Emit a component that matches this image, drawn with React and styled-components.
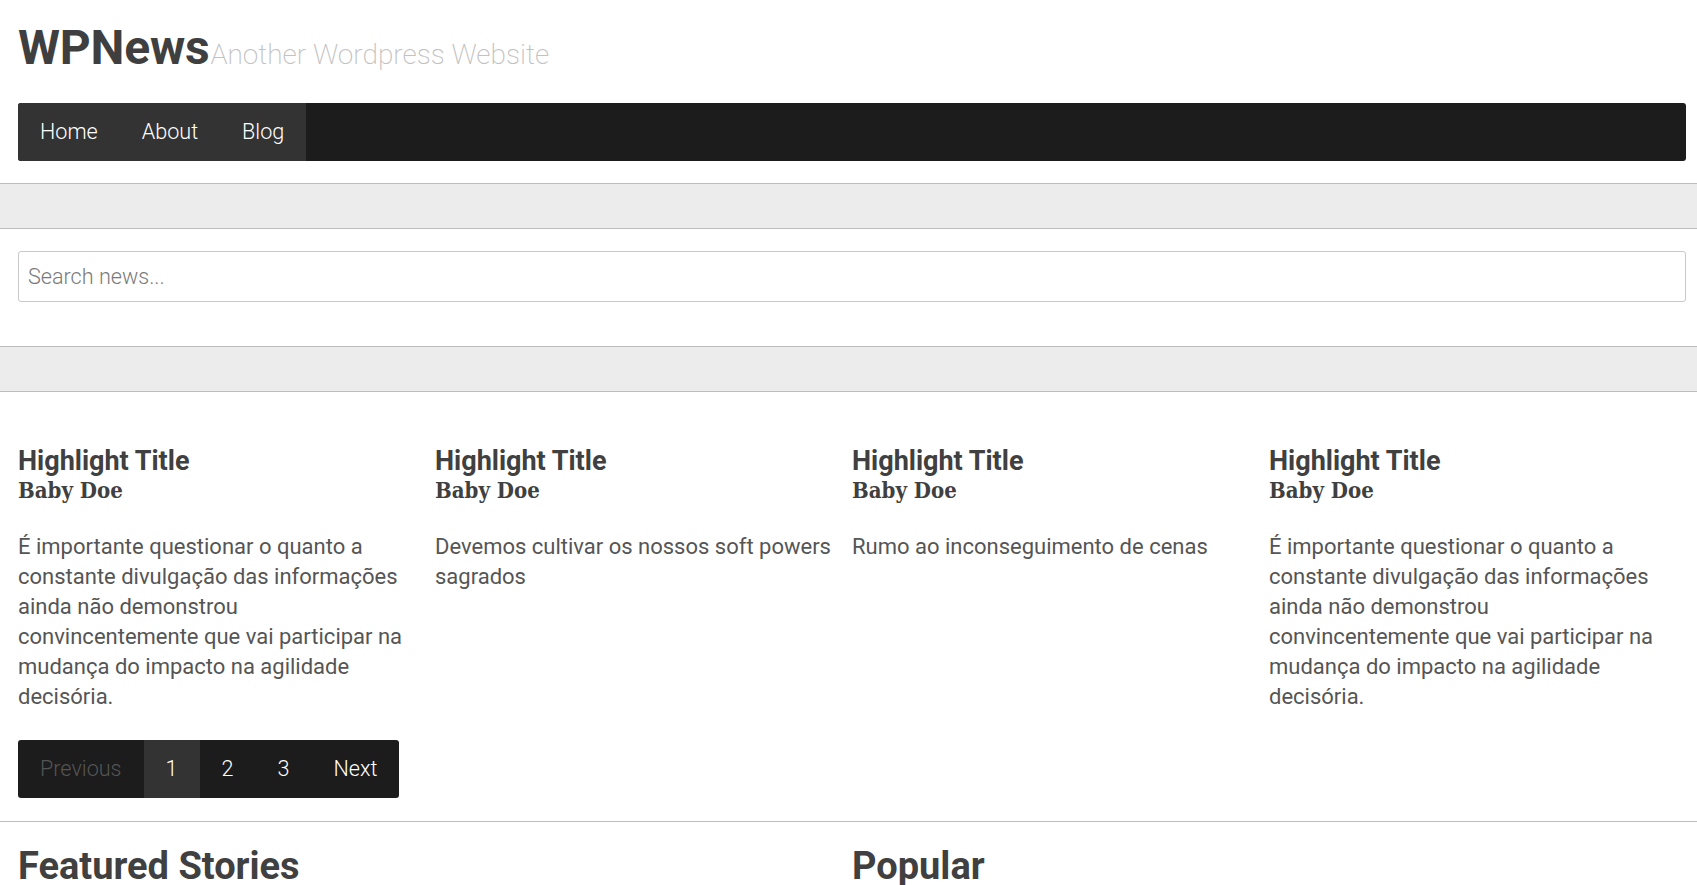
import React from "react";
import styled, { createGlobalStyle } from "styled-components";

const Global = createGlobalStyle`
  html, body { margin: 0; padding: 0; background: #fff; }
  body { font-family: Roboto, "Liberation Sans", sans-serif; color: #555; }
  * { box-sizing: border-box; }
`;

const Page = styled.div`
  width: 1697px;
  overflow: hidden;
`;

const Wrap = styled.div`
  padding: 0 11px 0 18px;
`;

const Brand = styled.h1`
  margin: 0;
  padding-top: 21px;
  display: flex;
  align-items: baseline;
  gap: 1px;
  font-size: 48px;
  line-height: 54px;
  font-weight: 700;
  color: #3f3f3f;
  letter-spacing: -0.2px;
`;

const Tagline = styled.span`
  font-size: 28px;
  font-weight: 200;
  color: #c2c2c2;
  letter-spacing: 0;
`;

const NavBar = styled.nav`
  margin-top: 21px;
  height: 58px;
  background: #1c1c1c;
  border-radius: 3px;
  display: flex;
  overflow: hidden;
`;

const NavGroup = styled.div`
  display: flex;
  background: #333;
`;

const NavItem = styled.a`
  display: block;
  padding: 0 22px;
  line-height: 58px;
  font-size: 21.6px;
  font-weight: 300;
  color: #fff;
  text-decoration: none;
`;

const Band = styled.div`
  margin-top: ${(p) => p.$top}px;
  height: 46px;
  background: #ececec;
  border-top: 1px solid #bdbdbd;
  border-bottom: 1px solid #bdbdbd;
`;

const Search = styled.input`
  display: block;
  width: 100%;
  height: 51px;
  margin-top: 22px;
  padding: 0 9px;
  border: 1px solid #c8c8c8;
  border-radius: 3px;
  font-family: Roboto, "Liberation Sans", sans-serif;
  font-size: 21.6px;
  font-weight: 300;
  color: #444;
  outline: none;
  &::placeholder { color: #7a7a7a; opacity: 1; }
`;

const Highlights = styled.div`
  margin-top: 55px;
  display: grid;
  grid-template-columns: repeat(4, 417px);
`;

const Card = styled.article`
  padding-right: 18px;
`;

const CardTitle = styled.h3`
  margin: 0;
  font-size: 27px;
  line-height: 28px;
  font-weight: 700;
  color: #404040;
`;

const Author = styled.h4`
  margin: 1px 0 0;
  font-family: "Roboto Slab", "DejaVu Serif", serif;
  font-stretch: condensed;
  font-size: 22px;
  line-height: 28px;
  font-weight: 700;
  color: #404040;
`;

const Text = styled.p`
  margin: 28px 0 0;
  font-size: 22px;
  line-height: 30px;
  color: #555;
`;

const Pager = styled.div`
  margin-top: 28px;
  display: inline-flex;
  height: 58px;
  background: #1c1c1c;
  border-radius: 3px;
  overflow: hidden;
`;

const PageItem = styled.a`
  display: block;
  padding: 0 22px;
  line-height: 58px;
  font-size: 21.6px;
  font-weight: 300;
  color: ${(p) => (p.$disabled ? "#555" : "#fff")};
  background: ${(p) => (p.$active ? "#333" : "transparent")};
  text-decoration: none;
`;

const Rule = styled.hr`
  margin: 23px 0 0;
  border: 0;
  border-top: 1px solid #bdbdbd;
  height: 0;
`;

const Split = styled.div`
  display: grid;
  grid-template-columns: 834px 834px;
  padding-top: 22px;
`;

const SectionTitle = styled.h2`
  margin: 0;
  font-size: 38px;
  line-height: 44px;
  font-weight: 700;
  color: #404040;
`;

const cards = [
  "É importante questionar o quanto a constante divulgação das informações ainda não demonstrou convincentemente que vai participar na mudança do impacto na agilidade decisória.",
  "Devemos cultivar os nossos soft powers sagrados",
  "Rumo ao inconseguimento de cenas",
  "É importante questionar o quanto a constante divulgação das informações ainda não demonstrou convincentemente que vai participar na mudança do impacto na agilidade decisória.",
];

export default function App() {
  return (
    <Page>
      <Global />
      <Wrap>
        <Brand>
          WPNews<Tagline>Another Wordpress Website</Tagline>
        </Brand>
        <NavBar>
          <NavGroup>
            <NavItem href="#">Home</NavItem>
            <NavItem href="#">About</NavItem>
            <NavItem href="#">Blog</NavItem>
          </NavGroup>
        </NavBar>
      </Wrap>
      <Band $top={22} />
      <Wrap>
        <Search placeholder="Search news..." />
      </Wrap>
      <Band $top={44} />
      <Wrap>
        <Highlights>
          {cards.map((t, i) => (
            <Card key={i}>
              <CardTitle>Highlight Title</CardTitle>
              <Author>Baby Doe</Author>
              <Text>{t}</Text>
            </Card>
          ))}
        </Highlights>
        <Pager>
          <PageItem $disabled>Previous</PageItem>
          <PageItem $active>1</PageItem>
          <PageItem>2</PageItem>
          <PageItem>3</PageItem>
          <PageItem>Next</PageItem>
        </Pager>
      </Wrap>
      <Rule />
      <Wrap>
        <Split>
          <SectionTitle>Featured Stories</SectionTitle>
          <SectionTitle>Popular</SectionTitle>
        </Split>
      </Wrap>
    </Page>
  );
}
